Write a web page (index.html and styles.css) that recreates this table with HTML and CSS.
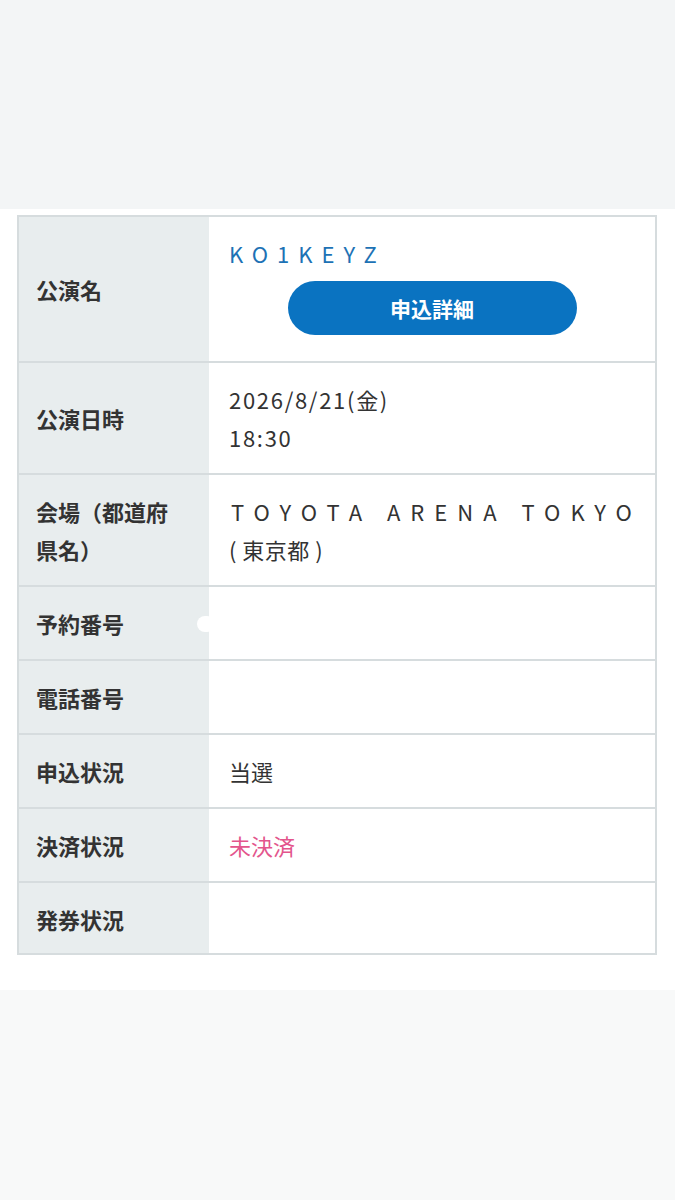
FILE: index.html
```html
<!DOCTYPE html>
<html lang="ja">
<head>
<meta charset="utf-8">
<title>申込詳細</title>
<link rel="stylesheet" href="styles.css">
</head>
<body>
<div class="top-band"></div>
<main class="content">
  <div class="detail">
    <div class="row row-title">
      <div class="label">公演名</div>
      <div class="value value-title">
        <div class="perf-name">KO1KEYZ</div>
        <a class="btn-detail">申込詳細</a>
      </div>
    </div>
    <div class="row">
      <div class="label">公演日時</div>
      <div class="value">
        <div class="date">2026/8/21(金)</div>
        <div class="date">18:30</div>
      </div>
    </div>
    <div class="row">
      <div class="label">会場（都道府県名）</div>
      <div class="value">
        <div class="venue">TOYOTA ARENA TOKYO</div>
        <div class="pref">( 東京都 )</div>
      </div>
    </div>
    <div class="row">
      <div class="label">予約番号</div>
      <div class="value value-blank"><span class="blot"></span></div>
    </div>
    <div class="row">
      <div class="label">電話番号</div>
      <div class="value"></div>
    </div>
    <div class="row">
      <div class="label">申込状況</div>
      <div class="value">当選</div>
    </div>
    <div class="row">
      <div class="label">決済状況</div>
      <div class="value unpaid">未決済</div>
    </div>
    <div class="row row-last">
      <div class="label">発券状況</div>
      <div class="value"></div>
    </div>
  </div>
</main>
<div class="bottom-band"></div>
</body>
</html>
```
FILE: styles.css
```css
html, body {
  margin: 0;
  padding: 0;
}
body {
  width: 675px;
  height: 1200px;
  display: flex;
  flex-direction: column;
  background: #ffffff;
  font-family: "Noto Sans CJK JP", "Noto Sans", sans-serif;
  color: #333333;
}
.top-band {
  height: 209px;
  background: #f3f5f6;
}
.content {
  background: #ffffff;
  padding: 6px 18px 35px 17px;
}
.bottom-band {
  flex: 1;
  background: #f8f9f9;
}
.detail {
  border: 2px solid #d6dcde;
  display: flex;
  flex-direction: column;
}
.row {
  display: grid;
  grid-template-columns: 190px 1fr;
  border-bottom: 2px solid #d6dcde;
}
.row-last {
  border-bottom: none;
}
.label {
  background: #e8edee;
  font-weight: 700;
  font-size: 22px;
  line-height: 38px;
  padding: 17px 20px 17px 17px;
  display: flex;
  align-items: center;
}
.value {
  position: relative;
  font-size: 22px;
  line-height: 38px;
  padding: 17px 20px 17px 20px;
  min-height: 38px;
}
.row-last .label,
.row-last .value {
  padding-bottom: 15px;
}
.value-title {
  padding-bottom: 26px;
  display: flex;
  flex-direction: column;
}
.perf-name {
  color: #1d72b5;
  letter-spacing: 9px;
}
.btn-detail {
  align-self: center;
  margin-top: 9px;
  width: 289px;
  height: 54px;
  border-radius: 27px;
  background: #0a73c1;
  color: #ffffff;
  font-weight: 700;
  font-size: 21px;
  display: flex;
  align-items: center;
  justify-content: center;
  text-decoration: none;
}
.date {
  letter-spacing: 1.7px;
}
.venue {
  letter-spacing: 10px;
  padding-left: 2px;
  white-space: nowrap;
}
.pref {
  letter-spacing: 0.5px;
}
.unpaid {
  color: #e3558c;
}
.blot {
  position: absolute;
  left: -12px;
  top: 29px;
  width: 18px;
  height: 16px;
  border-radius: 8px;
  background: #ffffff;
}
```
